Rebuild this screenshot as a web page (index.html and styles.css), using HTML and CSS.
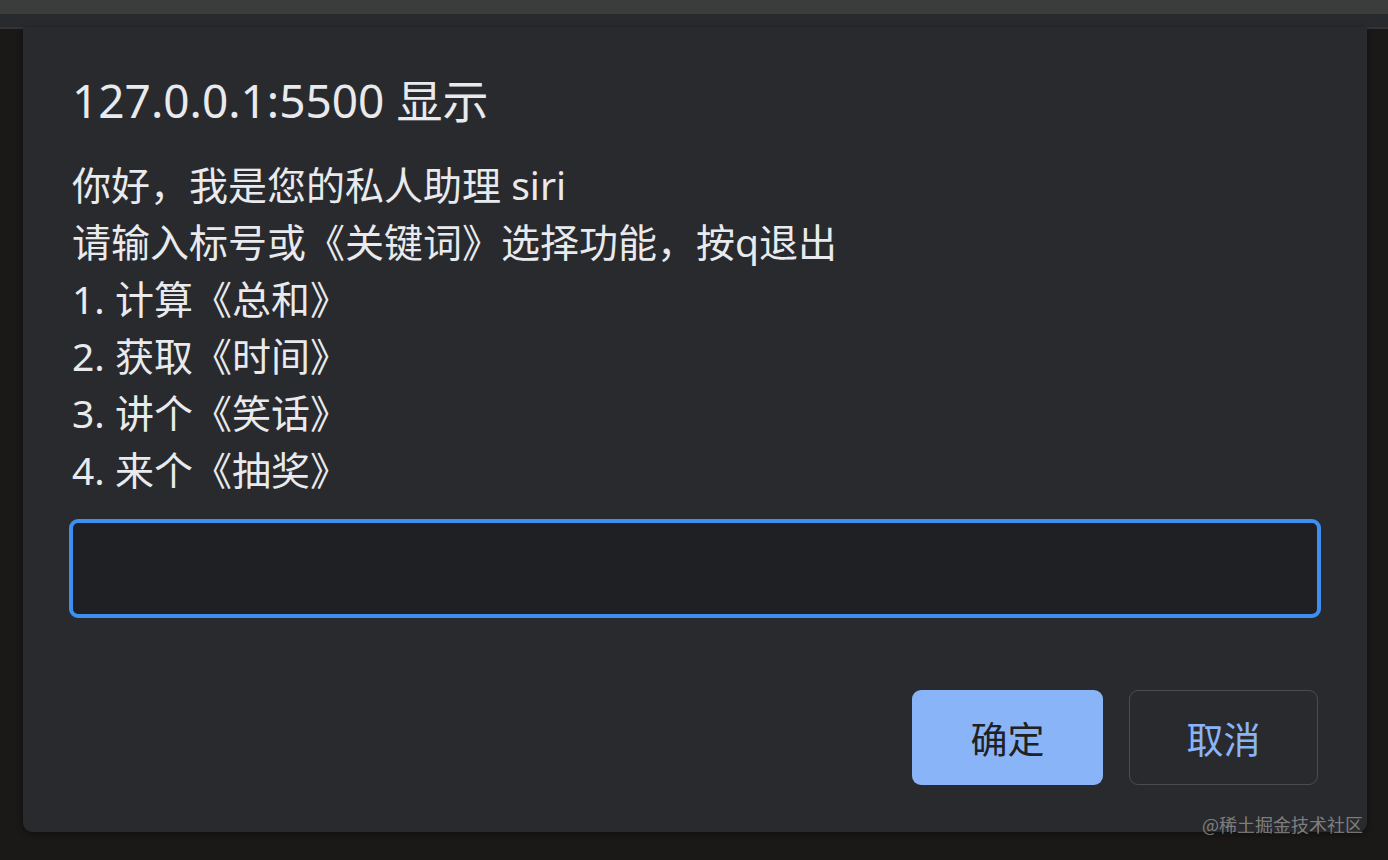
FILE: index.html
```html
<!DOCTYPE html>
<html lang="zh-CN">
<head>
    <meta charset="UTF-8">
    <meta name="viewport" content="width=device-width, initial-scale=1.0">
    <title>127.0.0.1:5500 显示</title>
    <link rel="stylesheet" href="styles.css">
</head>
<body>
    <div class="topbar"></div>
    <div class="band"></div>
    <div class="stage">
        <div class="dialog">
            <h1 class="title">127.0.0.1:5500 显示</h1>
            <div class="message">
                <p>你好，我是您的私人助理 siri</p>
                <p>请输入标号或《关键词》选择功能，按q退出</p>
                <p>1. 计算《总和》</p>
                <p>2. 获取《时间》</p>
                <p>3. 讲个《笑话》</p>
                <p>4. 来个《抽奖》</p>
            </div>
            <input class="prompt" type="text">
            <div class="buttons">
                <button class="btn primary">确定</button>
                <button class="btn secondary">取消</button>
            </div>
        </div>
        <span class="watermark">@稀土掘金技术社区</span>
    </div>
</body>
</html>
```

FILE: styles.css
```css
body {
    margin: 0;
    height: 860px;
    overflow: hidden;
    background: #1a1917;
    font-family: "Noto Sans", "Noto Sans CJK SC", sans-serif;
    color: #e8eaed;
}

.topbar {
    height: 14px;
    background: #3b3c3c;
}

.band {
    height: 13px;
    background: #292a2d;
}

.stage {
    position: relative;
    height: 833px;
    padding: 0 21px 0 23px;
    box-shadow: inset 0 2px 0 #333433;
}

.dialog {
    background: #292a2d;
    border-radius: 0 0 9px 9px;
    padding: 43px 46px 47px 46px;
    box-shadow: 0 2px 6px rgba(0, 0, 0, 0.4);
}

.title {
    margin: 0;
    font-size: 46px;
    font-weight: 400;
    line-height: 60px;
    padding-left: 3px;
}

.message {
    margin-top: 26px;
    padding-left: 3px;
    font-size: 39px;
    line-height: 57px;
}

.message p {
    margin: 0;
}

.prompt {
    display: block;
    box-sizing: border-box;
    width: 100%;
    height: 99px;
    margin-top: 21px;
    background: #1f2023;
    border: 4px solid #3d8ff2;
    border-radius: 9px;
    outline: none;
}

.buttons {
    display: flex;
    justify-content: flex-end;
    gap: 26px;
    margin-top: 72px;
    padding-right: 3px;
}

.btn {
    height: 95px;
    border-radius: 9px;
    font-family: "Noto Sans CJK SC", sans-serif;
    font-size: 37px;
}

.primary {
    width: 191px;
    background: #8ab4f8;
    border: none;
    color: #202124;
}

.secondary {
    width: 189px;
    background: transparent;
    border: 1px solid #494c50;
    color: #8ab4f8;
}

.watermark {
    position: absolute;
    right: 25px;
    top: 787px;
    font-family: "Noto Sans CJK SC", sans-serif;
    font-size: 18px;
    line-height: 20px;
    color: rgba(200, 200, 200, 0.55);
}
```
